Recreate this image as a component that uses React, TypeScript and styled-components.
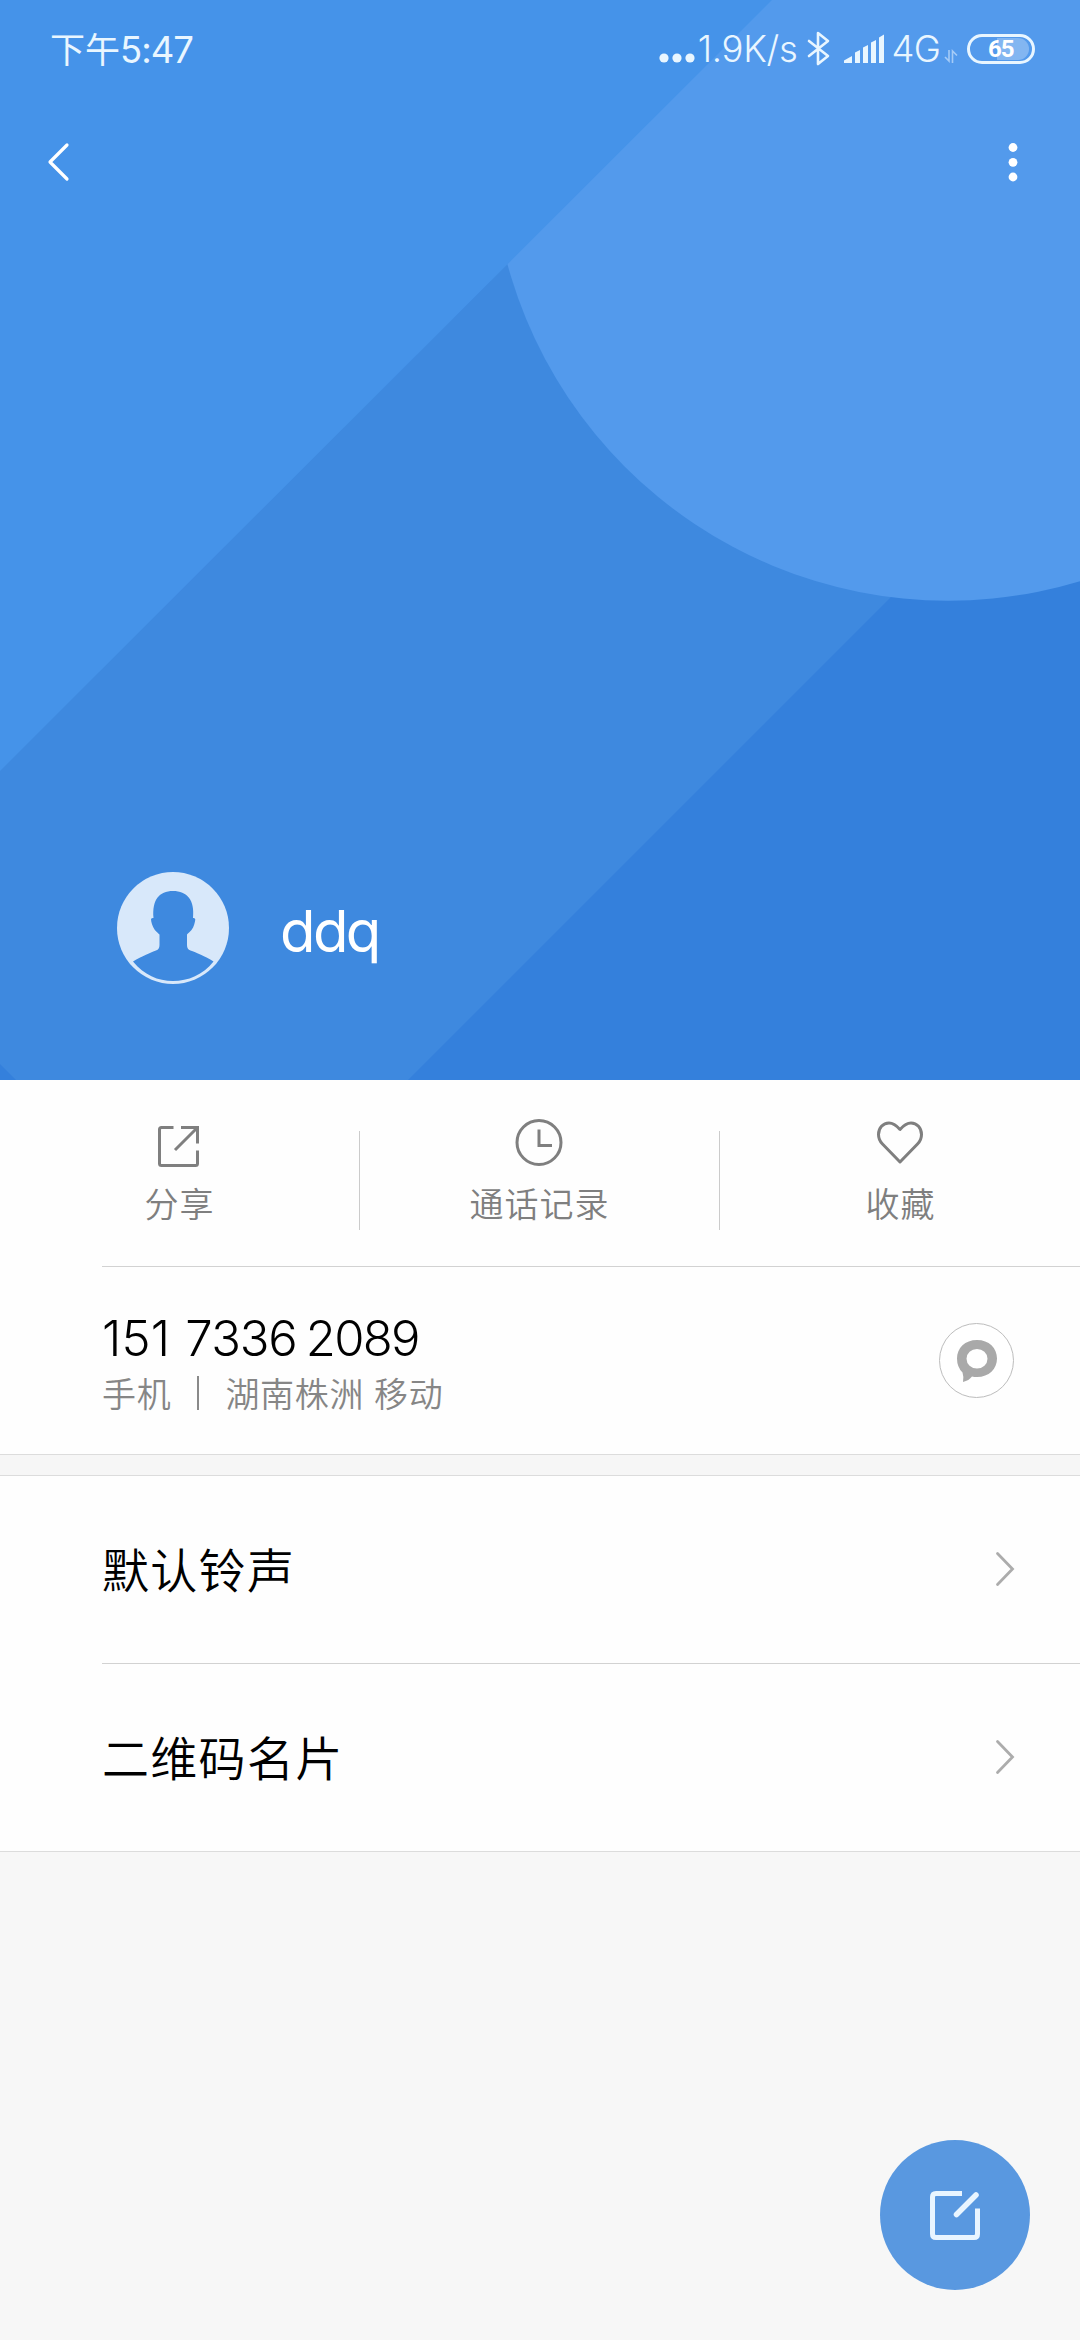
import React from "react";
import styled, { createGlobalStyle } from "styled-components";

const GlobalStyle = createGlobalStyle`
  * { box-sizing: border-box; }
  body {
    margin: 0;
    background: #f7f7f7;
    font-family: Inter, "Noto Sans CJK SC", sans-serif;
  }
  svg { display: block; flex: none; }
`;

const Screen = styled.main`
  position: relative;
  width: 1080px;
  height: 2340px;
  overflow: hidden;
  display: flex;
  flex-direction: column;
  background: #f7f7f7;
`;

const Hero = styled.header`
  position: relative;
  height: 1080px;
  flex: none;
  display: flex;
  flex-direction: column;
  color: #fff;
  background: #3e89df;
`;

const Backdrop = styled.svg`
  position: absolute;
  inset: 0;
`;

const StatusBar = styled.div`
  position: relative;
  height: 98px;
  padding: 0 45px 0 50px;
  display: flex;
  align-items: center;
  justify-content: space-between;
  color: #e9f6ff;
`;

const StatusGroup = styled.div`
  display: flex;
  align-items: center;
`;

const StatusText = styled.span<{ $spacing?: number; $weight?: number }>`
  font-size: 36.5px;
  font-weight: ${(p) => p.$weight ?? 350};
  line-height: 48px;
  letter-spacing: ${(p) => p.$spacing ?? 0}px;
  white-space: nowrap;
`;

const Meridiem = styled.span`
  font-family: "Noto Sans CJK SC", sans-serif;
  font-size: 35px;
  font-weight: 400;
  letter-spacing: 0;
`;

const Slot = styled.div<{ $left: number }>`
  margin-left: ${(p) => p.$left}px;
`;

const Battery = styled.div`
  width: 68px;
  height: 30px;
  margin-left: 9px;
  padding: 1px;
  border: 3px solid #e9f6ff;
  border-radius: 15px;
  display: flex;
`;

const BatteryLevel = styled.div`
  width: 58px;
  border-radius: 11px;
  background: linear-gradient(90deg, transparent 44%, rgba(255, 255, 255, 0.28) 44%);
  color: #fff;
  font-family: Roboto, sans-serif;
  font-size: 24px;
  font-weight: 700;
  line-height: 23px;
  letter-spacing: -1px;
  padding-left: 17px;
`;

const TitleBar = styled.nav`
  position: relative;
  height: 128px;
  padding: 0 62px 0 46px;
  display: flex;
  align-items: center;
  justify-content: space-between;
`;

const Profile = styled.div`
  position: relative;
  margin: auto 0 96px 117px;
  height: 112px;
  display: flex;
  align-items: center;
  gap: 51px;
`;

const ContactName = styled.h1`
  margin: 6px 0 0;
  font-size: 58px;
  font-weight: 400;
  line-height: 70px;
  letter-spacing: -2.6px;
`;

const Panel = styled.section`
  background: #fefefe;
  border-bottom: 1px solid #dcdcdc;
`;

const Inset = styled.div`
  margin-left: 102px;
  height: 1px;
  background: #d2d2d2;
`;

const Actions = styled.div`
  height: 186px;
  display: grid;
  grid-template-columns: repeat(3, 360px);
`;

const Action = styled.button`
  height: 99px;
  margin-top: 51px;
  padding: 0 2px 0 0;
  border: 0;
  border-right: 1px solid #cbcbcb;
  background: none;
  font: inherit;
  display: flex;
  flex-direction: column;
  align-items: center;
  justify-content: flex-start;
  &:last-child {
    padding: 0;
    border-right-color: transparent;
  }
`;

const ActionIcon = styled.svg`
  margin-top: -16px;
  fill: none;
  stroke: #7f7f7f;
  stroke-width: 3;
`;

const ActionLabel = styled.span`
  margin: 10px 0 0 2px;
  font-family: "Noto Sans CJK SC", sans-serif;
  font-size: 34px;
  font-weight: 350;
  line-height: 48px;
  letter-spacing: 1px;
  color: #7f7f7f;
`;

const PhoneRow = styled.div`
  height: 187px;
  padding: 0 66px 0 102px;
  display: flex;
  align-items: center;
  justify-content: space-between;
`;

const PhoneText = styled.div`
  display: flex;
  flex-direction: column;
  padding-top: 6px;
`;

const PhoneNumber = styled.div`
  font-size: 49px;
  font-weight: 350;
  font-kerning: none;
  line-height: 58px;
  white-space: pre;
  color: #000;
`;

const DigitGroup = styled.span<{ $spacing: number; $gap?: number }>`
  letter-spacing: ${(p) => p.$spacing}px;
  word-spacing: ${(p) => p.$gap ?? 0}px;
`;

const PhoneMeta = styled.div`
  display: flex;
  align-items: center;
  font-family: "Noto Sans CJK SC", sans-serif;
  font-size: 34px;
  font-weight: 350;
  line-height: 50px;
  letter-spacing: 0.7px;
  word-spacing: 1.5px;
  color: #868686;
`;

const MetaRule = styled.i`
  width: 2px;
  height: 34px;
  margin: 0 26px;
  background: #8a8a8a;
`;

const MessageButton = styled.button`
  width: 75px;
  height: 75px;
  padding: 0;
  border: 1px solid #bdbdbd;
  border-radius: 50%;
  background: #fff;
  display: grid;
  place-items: center;
`;

const Gap = styled.div`
  height: 20px;
  background: #f6f6f6;
`;

const MenuPanel = styled(Panel)`
  border-top: 1px solid #dcdcdc;
`;

const MenuRow = styled.div`
  height: 187px;
  padding: 0 64px 2px 102px;
  display: flex;
  align-items: center;
  justify-content: space-between;
`;

const MenuLabel = styled.span`
  margin-top: -2px;
  font-family: "Noto Sans CJK SC", sans-serif;
  font-size: 47px;
  font-weight: 350;
  line-height: 60px;
  letter-spacing: 1.3px;
  color: #000;
`;

const EditButton = styled.button`
  position: absolute;
  right: 50px;
  bottom: 50px;
  width: 150px;
  height: 150px;
  padding: 0;
  border: 0;
  border-radius: 50%;
  background: #5998e0;
  display: grid;
  place-items: center;
`;

const Chevron = () => (
  <svg width="22" height="36" viewBox="0 0 22 36" fill="none" stroke="#acacac" strokeWidth="2.8" strokeLinecap="round">
    <path d="M3.5 2.5 18.5 18 3.5 33.5" />
  </svg>
);

export default function App() {
  return (
    <>
      <GlobalStyle />
      <Screen>
        <Hero>
          <Backdrop width="1080" height="1080" viewBox="0 0 1080 1080">
            <path d="M1080 408V1080H408ZM0 1064 16 1080H0Z" fill="#3480dc" />
            <circle cx="948" cy="144" r="456.7" fill="#539aec" />
            <path d="M0 0H772L0 771Z" fill="#4593e9" />
          </Backdrop>
          <StatusBar>
            <StatusText $spacing={-1} $weight={400}>
              <Meridiem>下午</Meridiem>5:47
            </StatusText>
            <StatusGroup>
              <svg width="36" height="30" viewBox="0 0 36 30" fill="#e9f6ff">
                <circle cx="5" cy="24" r="4.6" />
                <circle cx="18" cy="24" r="4.6" />
                <circle cx="31" cy="24" r="4.6" />
              </svg>
              <Slot $left={3}>
                <StatusText $spacing={-0.3}>1.9K/s</StatusText>
              </Slot>
              <Slot $left={9}>
                <svg width="24" height="36" viewBox="0 0 24 36" fill="none" stroke="#e9f6ff" strokeWidth="2.6" strokeLinejoin="round" strokeLinecap="round">
                  <path d="M2 10 21 25 11 33V2L21 10 2 25" />
                </svg>
              </Slot>
              <Slot $left={13}>
                <svg width="41" height="30" viewBox="0 0 41 30" fill="#e9f6ff">
                  <path d="M0 29V26.500L8 22V29ZM11 29V18.500L16 16V29ZM19 29V13.500L24 11V29ZM27 29V8.500L32 6V29ZM35 29V3.500L40 0.500V29Z" />
                </svg>
              </Slot>
              <Slot $left={7}>
                <StatusText $spacing={-0.8}>4G</StatusText>
              </Slot>
              <Slot $left={4}>
                <svg width="14" height="30" viewBox="0 0 14 30" fill="none" stroke="#a5cbf7" strokeWidth="1.6">
                  <path d="M5 16V27L1 23M8.500 29V17L13 21.500" />
                </svg>
              </Slot>
              <Battery>
                <BatteryLevel>65</BatteryLevel>
              </Battery>
            </StatusGroup>
          </StatusBar>
          <TitleBar>
            <svg width="26" height="40" viewBox="0 0 26 40" fill="none" stroke="#fff" strokeWidth="3.2" strokeLinecap="round" strokeLinejoin="round">
              <path d="M21 3 4 20 21 37" />
            </svg>
            <svg width="10" height="40" viewBox="0 0 10 40" fill="#fff">
              <circle cx="5" cy="5.500" r="4.400" />
              <circle cx="5" cy="20.300" r="4.400" />
              <circle cx="5" cy="35" r="4.400" />
            </svg>
          </TitleBar>
          <Profile>
            <svg width="112" height="112" viewBox="0 0 112 112">
              <circle cx="56" cy="56" r="56" fill="#d8e8fa" />
              <path
                d="M16 89.500C25 84 34 80.500 39 78.500C41.500 77.500 42.500 76 42.500 73V62.500C41.500 61.500 39.500 60 37.500 57.500C35.500 54.500 34 50 34 47C34.500 46 35.500 46 36.500 46C35 28 42 19 56 19C70 19 78 28 76 46C77 46 78 46 78.300 47.500C78 50 77 55 74.500 58C73 60 71 61 70 62.500V73C70 76 71 77.500 73.500 78.500C79 80.500 88 84 96.500 89.500C86 103 71 109 56 109C41 109 27 103 16 89.500Z"
                fill="#3e89df"
              />
            </svg>
            <ContactName>ddq</ContactName>
          </Profile>
        </Hero>

        <Panel>
          <Actions>
            <Action>
              <ActionIcon width="50" height="54" viewBox="0 0 50 54">
                <path d="M19.500 12.500H7.500Q5.500 12.500 5.500 14.500V48.500Q5.500 50.500 7.500 50.500H41.500Q43.500 50.500 43.500 48.500V35.500M27 12.500H43.500V28.500M43 13 21 35" />
              </ActionIcon>
              <ActionLabel>分享</ActionLabel>
            </Action>
            <Action>
              <ActionIcon width="50" height="54" viewBox="0 0 50 54">
                <circle cx="25" cy="27.500" r="22" />
                <path d="M25 14.500V30.500H38" />
              </ActionIcon>
              <ActionLabel>通话记录</ActionLabel>
            </Action>
            <Action>
              <ActionIcon width="50" height="54" viewBox="0 0 50 54" strokeLinejoin="round">
                <path d="M25 14.500C21 10 18 8 14 8C8 8 3.500 13 3.500 19.500C3.500 24 5 26.500 7.500 29L25 47L42.500 29C45 26.500 46.500 24 46.500 19.500C46.500 13 42 8 36 8C32 8 29 10 25 14.500Z" />
              </ActionIcon>
              <ActionLabel>收藏</ActionLabel>
            </Action>
          </Actions>
          <Inset />
          <PhoneRow>
            <PhoneText>
              <PhoneNumber>
                <DigitGroup $spacing={0.2} $gap={1}>{"151 "}</DigitGroup>
                <DigitGroup $spacing={-1.3} $gap={-3}>{"7336 "}</DigitGroup>
                <DigitGroup $spacing={-1.7}>2089</DigitGroup>
              </PhoneNumber>
              <PhoneMeta>
                手机
                <MetaRule />
                湖南株洲 移动
              </PhoneMeta>
            </PhoneText>
            <MessageButton>
              <svg width="42" height="44" viewBox="0 0 42 44" fill="#a9a9a9">
                <path fillRule="evenodd" d="M21 1C33 1 41 9 41 19.500S33 38 21 38Q18 38 16 37.500Q13 41.500 7 43Q8 38 6.500 33.500Q1 28 1 19.500C1 9 9 1 21 1ZM21 10A10.500 9.800 0 1 0 21 29.600A10.500 9.800 0 1 0 21 10Z" />
              </svg>
            </MessageButton>
          </PhoneRow>
        </Panel>
        <Gap />
        <MenuPanel>
          <MenuRow>
            <MenuLabel>默认铃声</MenuLabel>
            <Chevron />
          </MenuRow>
          <Inset />
          <MenuRow>
            <MenuLabel>二维码名片</MenuLabel>
            <Chevron />
          </MenuRow>
        </MenuPanel>

        <EditButton>
          <svg width="52" height="52" viewBox="0 0 52 52" fill="none" stroke="#e9f5ff" strokeWidth="5">
            <path d="M33 4.500H7Q3.500 4.500 3.500 8V45Q3.500 48.500 7 48.500H45Q48.500 48.500 48.500 45V19.500" />
            <path d="M27.500 25.500 47 6" strokeLinecap="round" strokeWidth="5.500" />
          </svg>
        </EditButton>
      </Screen>
    </>
  );
}
